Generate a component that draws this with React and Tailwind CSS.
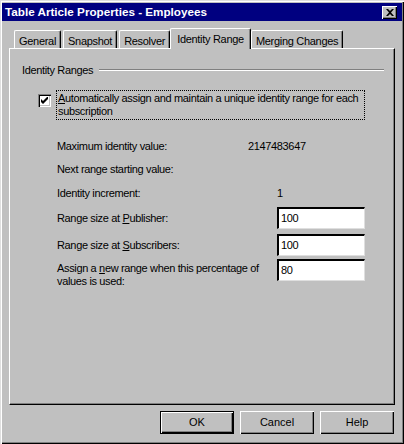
import { useState } from 'react';

const font = { fontFamily: '"Liberation Sans", Arial, sans-serif' };

function Tab({ label, active }) {
  if (active) {
    return (
      <div className="relative z-10 -mx-[2px] -mb-[1px] h-[21px] px-[6px] pt-[2px] whitespace-nowrap border-t border-l border-white border-r border-r-black bg-[#c0c0c0] rounded-tl-[2px] rounded-tr-[2px] shadow-[inset_-1px_0_0_#808080] text-[11px] tracking-[-0.3px] text-black">
        {label}
      </div>
    );
  }
  return (
    <div className="h-[18px] px-[4px] pt-[2px] whitespace-nowrap border-t border-l border-white border-r border-r-black rounded-tl-[2px] rounded-tr-[2px] shadow-[inset_-1px_0_0_#808080] text-[11px] tracking-[-0.3px] text-black">
      {label}
    </div>
  );
}

function Field({ value }) {
  return (
    <div className="w-[88px] h-[22px] bg-white border-t-2 border-l-2 border-t-black border-l-black border-b border-r border-b-[#dfdfdf] border-r-[#dfdfdf] px-[2px] flex items-center text-[11px] text-black">
      {value}
    </div>
  );
}

function Button({ children, primary }) {
  return (
    <button
      className={
        'w-[74px] h-[23px] bg-[#c0c0c0] text-[11px] text-black flex items-center justify-center ' +
        (primary
          ? 'border border-black shadow-[inset_1px_1px_0_#fff,inset_-1px_-1px_0_#000,inset_-2px_-2px_0_#808080]'
          : 'shadow-[inset_1px_1px_0_#fff,inset_-1px_-1px_0_#000,inset_-2px_-2px_0_#808080]')
      }
    >
      {children}
    </button>
  );
}

export default function App() {
  const [checked, setChecked] = useState(true);

  return (
    <div style={font} className="w-[404px] h-[444px] bg-[#c0c0c0] p-[2px] pt-[3px] flex flex-col shadow-[inset_1px_1px_0_#dfdfdf,inset_2px_2px_0_#fff,inset_-1px_-1px_0_#000,inset_-2px_-2px_0_#808080]">
      {/* title bar */}
      <div className="h-[18px] bg-[#000080] flex items-center justify-between pl-[3px] pr-[5px]">
        <span className="text-white font-bold text-[11.7px]">Table Article Properties - Employees</span>
        <div className="w-[15px] h-[13px] bg-[#c0c0c0] flex items-center justify-center shadow-[inset_1px_1px_0_#fff,inset_-1px_-1px_0_#000,inset_-2px_-2px_0_#808080]">
          <svg width="8" height="7" viewBox="0 0 8 7">
            <path d="M0 0h2l2 2 2-2h2L5 3.5 8 7H6L4 5 2 7H0l3-3.5z" fill="#000" />
          </svg>
        </div>
      </div>

      {/* tabs */}
      <div className="flex items-end gap-[2px] pl-[12px] mt-[4px] h-[23px]">
        <Tab label="General" />
        <Tab label="Snapshot" />
        <Tab label="Resolver" />
        <Tab label="Identity Range" active />
        <Tab label="Merging Changes" />
      </div>

      {/* panel */}
      <div className="mx-[7px] h-[357px] border-t border-l border-white border-r border-b border-r-black border-b-black shadow-[inset_-1px_-1px_0_#808080] pl-[12px] pr-[10px] pt-[13px] text-[11px] tracking-[-0.35px] text-black">
        <div className="flex items-center gap-[6px]">
          <span>Identity Ranges</span>
          <div className="flex-1 h-[2px] border-t border-[#808080] border-b border-b-white" />
        </div>

        <div className="flex items-start mt-[11px] pl-[16px]">
          <button
            onClick={() => setChecked(!checked)}
            className="mt-[4px] w-[13px] h-[13px] bg-white flex items-center justify-center shrink-0 shadow-[inset_1px_1px_0_#808080,inset_2px_2px_0_#000,inset_-1px_-1px_0_#fff,inset_-2px_-2px_0_#c0c0c0]"
          >
            {checked && (
              <svg width="7" height="7" viewBox="0 0 7 7">
                <path d="M0 2v3l2 2 5-5V-1L2 4z" fill="#000" />
              </svg>
            )}
          </button>
          <div className="ml-[5px] w-[309px] border border-dotted border-black px-[1px] py-[1px] leading-[13px]">
            <span className="underline">A</span>utomatically assign and maintain a unique identity range for each subscription
          </div>
        </div>

        <div className="pl-[35px] mt-[15px]">
          <div className="flex h-[23px] items-center">
            <span className="w-[191px]">Maximum identity value:</span>
            <span>2147483647</span>
          </div>
          <div className="flex h-[24px] items-center">
            <span>Next range starting value:</span>
          </div>
          <div className="flex h-[23px] items-center">
            <span className="w-[220px]">Identity increment:</span>
            <span>1</span>
          </div>
          <div className="flex h-[27px] items-center">
            <span className="w-[220px]">Range size at <span className="underline">P</span>ublisher:</span>
            <Field value="100" />
          </div>
          <div className="flex h-[27px] items-center">
            <span className="w-[220px]">Range size at <span className="underline">S</span>ubscribers:</span>
            <Field value="100" />
          </div>
          <div className="flex items-start">
            <span className="w-[220px] leading-[13px] pt-[3px] pr-[2px]">
              Assign a <span className="underline">n</span>ew range when this percentage of values is used:
            </span>
            <Field value="80" />
          </div>
        </div>
      </div>

      {/* buttons */}
      <div className="flex justify-end gap-[6px] pr-[8px] mt-[6px]">
        <Button primary>OK</Button>
        <Button>Cancel</Button>
        <Button>Help</Button>
      </div>
    </div>
  );
}
